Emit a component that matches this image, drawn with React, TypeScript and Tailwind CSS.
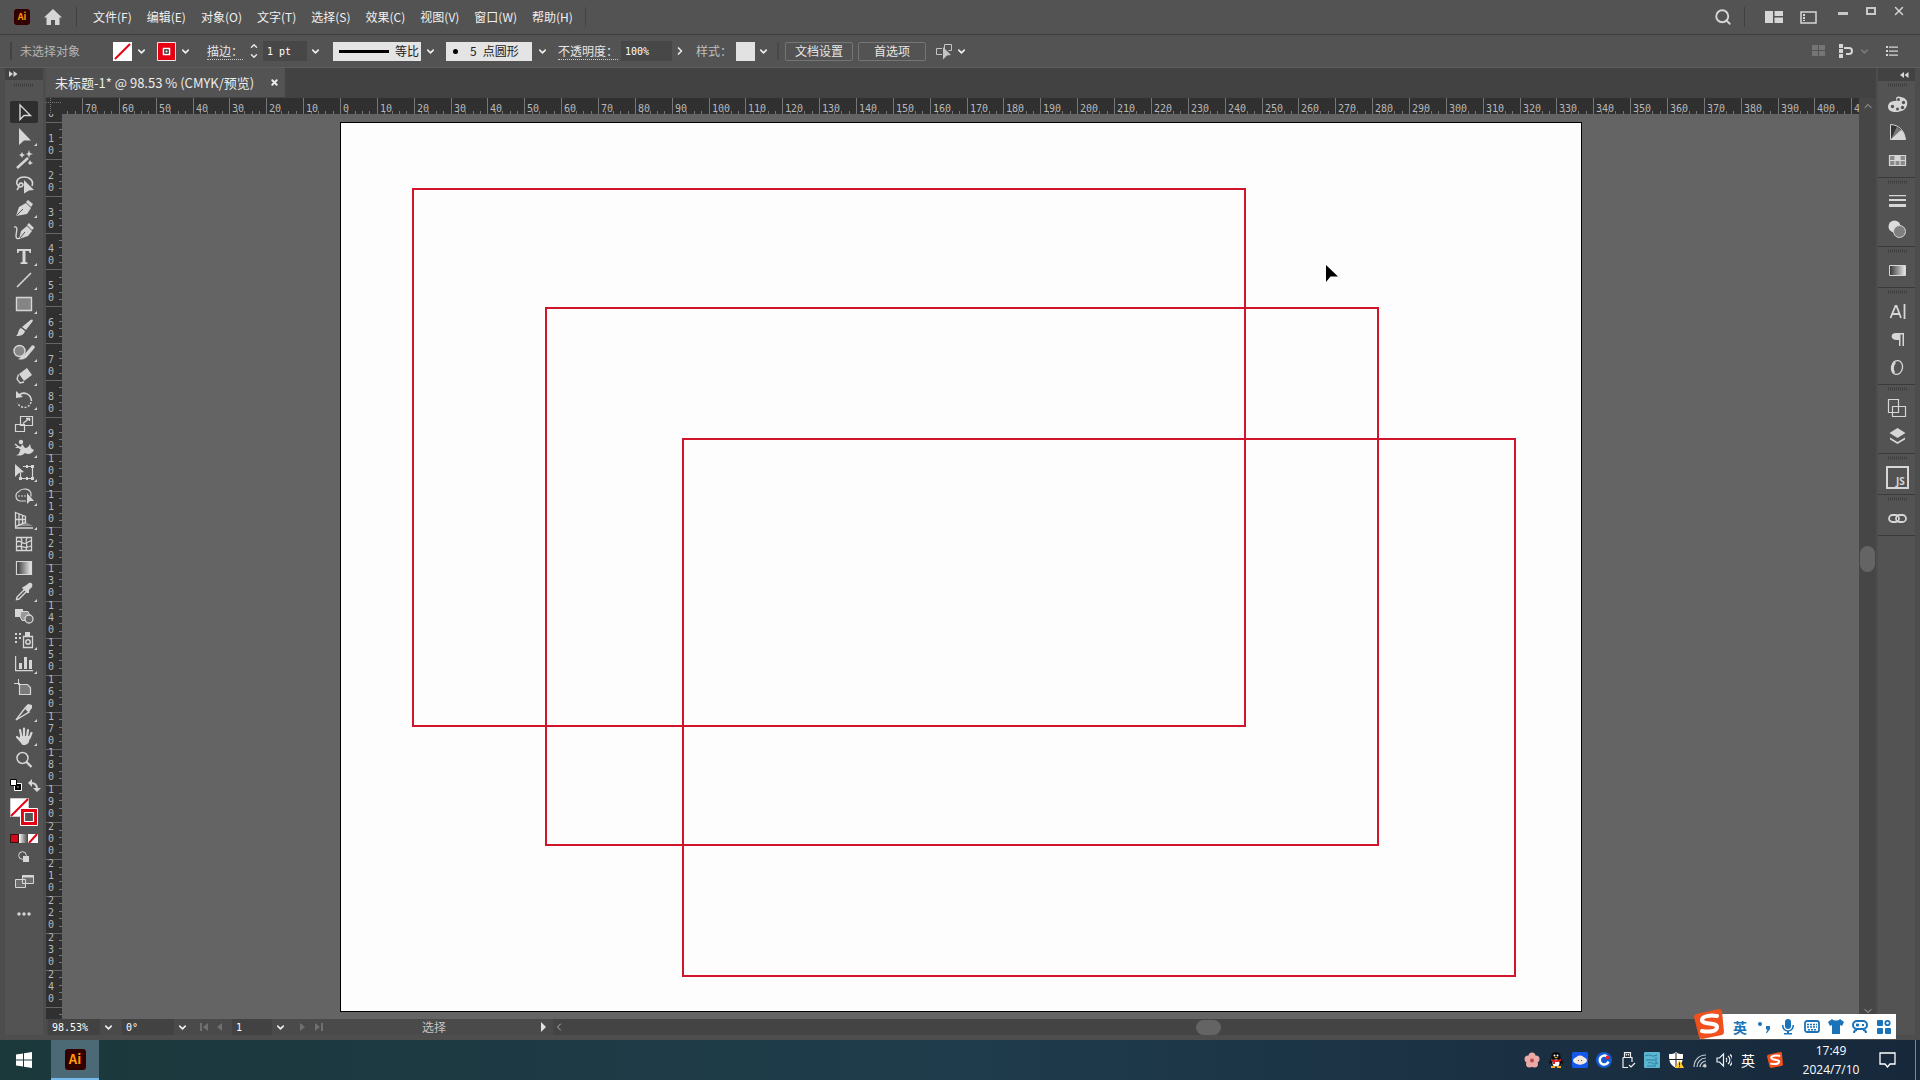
import { ReactNode, useState } from "react";
import { ChevronDown, ChevronLeft, ChevronRight, ChevronUp, Search, X } from "lucide-react";

const MENUS = ["文件(F)", "编辑(E)", "对象(O)", "文字(T)", "选择(S)", "效果(C)", "视图(V)", "窗口(W)", "帮助(H)"];

// pixels between two labelled ruler ticks (10 mm)
const PITCH = 36.86;

type Tool = { name: string; icon: ReactNode; more?: boolean };

const line = { fill: "none", stroke: "currentColor" };

// every tool glyph lives in a 28x22 box
const TOOLS: Tool[] = [
  { name: "选择工具", icon: <path {...line} strokeWidth="1.4" d="M10 4l10.5 10.5H14L10 18.5z" /> },
  { name: "直接选择工具", more: true, icon: <path fill="currentColor" d="M9 3l12 12.5h-7L9 20z" /> },
  {
    name: "魔棒工具",
    icon: (
      <>
        <path {...line} strokeWidth="2.4" d="M7 19l11-10" />
        <path fill="currentColor" d="M12 3l1 2 2 1-2 1-1 2-1-2-2-1 2-1zM19 1l1 3 3 1-3 1-1 3-1-3-2-1 2-1zM20 11l1 2 2 1-2 1-1 1-1-1-1-1 1-1z" />
      </>
    ),
  },
  {
    name: "套索工具",
    icon: (
      <>
        <path {...line} strokeWidth="1.6" d="M22 13c2-5-2-9-8-9-5 0-8 3-7 7 1 3 5 4 6 1 0-2-3-3-4 0 0 2 0 3-2 5" />
        <path fill="currentColor" d="M14 7l10 10-5 .5-5 3z" />
      </>
    ),
  },
  {
    name: "钢笔工具",
    more: true,
    icon: (
      <>
        <path fill="currentColor" d="M6 19l3-9 7-4 5 5-4 6z" />
        <path fill="currentColor" d="M16 5l2-2 5 4-2 3z" />
        <path stroke="#535353" d="M6.500 18.500L13 12" />
      </>
    ),
  },
  {
    name: "曲率工具",
    icon: (
      <>
        <path {...line} strokeWidth="1.4" d="M4 6c5-1 2 5 2 9 0 3 3 4 5 0" />
        <path fill="currentColor" d="M9 18l2-8 6-5 5 5-4 5zM17 4l2-2 5 5-2 2z" />
        <path stroke="#535353" d="M10 17l5-6" />
      </>
    ),
  },
  { name: "文字工具", more: true, icon: <path fill="currentColor" d="M7 4h14v4h-1.500l-.5-2H15.500v11l2 .5V19h-7v-1.500l2-.5V6H9l-.5 2H7z" /> },
  { name: "直线段工具", more: true, icon: <path {...line} strokeWidth="1.6" d="M7 18L21 4" /> },
  { name: "矩形工具", more: true, icon: <path fill="#858585" stroke="currentColor" strokeWidth="1.4" d="M6.500 4.500h15v13h-15z" /> },
  {
    name: "画笔工具",
    more: true,
    icon: <path fill="currentColor" d="M22 2.500c1 0 1 1 .5 2L16 13l-4-3 8.500-7zM11 11l4 3c-1 4-4 5-9 5 3-2 1.500-6 5-8z" />,
  },
  {
    name: "斑点画笔工具",
    more: true,
    icon: (
      <>
        <circle cx="9.500" cy="10" r="5.500" fill="#858585" stroke="currentColor" strokeWidth="1.4" />
        <path {...line} strokeWidth="3.500" strokeLinecap="round" d="M15 15.500L23 6" />
        <path fill="currentColor" d="M8 18c3-1 3-4 6-4l2 2c-2 3-5 3-8 2z" />
      </>
    ),
  },
  {
    name: "橡皮擦工具",
    more: true,
    icon: (
      <>
        <path fill="currentColor" d="M17 3l5 7-8 6-5-7z" />
        <path {...line} strokeWidth="1.3" d="M8.500 9.500L7 14l3 4 4-1" />
      </>
    ),
  },
  {
    name: "旋转工具",
    more: true,
    icon: (
      <>
        <path {...line} strokeWidth="1.6" d="M9 6c5-4 12-1 12.500 6" />
        <path {...line} strokeDasharray="2 1.500" strokeWidth="1.4" d="M21 13c-1 6-10 8-13.500 1" />
        <path fill="currentColor" d="M6 2v7l7-1z" />
      </>
    ),
  },
  {
    name: "比例缩放工具",
    more: true,
    icon: (
      <>
        <path {...line} strokeWidth="1.2" d="M10.500 3.500h12v9h-12zM5.500 11.500h9v7h-9z" />
        <path {...line} strokeWidth="1.4" d="M13 10.500l6-5M16 5.500h3.500V8" />
      </>
    ),
  },
  {
    name: "变形工具",
    more: true,
    icon: (
      <>
        <path fill="currentColor" d="M6 18c4 0 3-4 5-6-2-1-4 0-6-2 3 0 4-1 6 0l1-3 3 4c3 0 4-2 5-4 1 3 0 4 4 6-2 4-6 5-9 3-3 3-6 3-9 2z" />
        <circle cx="11" cy="5" r="2.200" fill="currentColor" />
        <path {...line} strokeWidth="1.5" d="M5 7l6 5" />
      </>
    ),
  },
  {
    name: "自由变换工具",
    more: true,
    icon: (
      <>
        <path {...line} strokeWidth="1.2" d="M13 5.500h9.500v12h-12V12" />
        <path fill="currentColor" d="M5 3l9 8-5 1-4 4zM21 4h3v3h-3zM21 16h3v3h-3zM9 16h3v3H9zM16 4h2v3h-2zM16 16h2v3h-2z" />
      </>
    ),
  },
  {
    name: "形状生成器工具",
    more: true,
    icon: (
      <>
        <path {...line} strokeWidth="1.2" d="M16 16H10a5 5 0 0 1-1-9.500c3-4 11-3 12 2v3" />
        <path {...line} strokeDasharray="2 1" d="M8 11h9" />
        <path fill="currentColor" d="M17 8l7 8h-4l-3 3z" />
      </>
    ),
  },
  {
    name: "透视网格工具",
    more: true,
    icon: (
      <>
        <path fill="#8a8a8a" d="M14 12l9 5H7z" />
        <path {...line} strokeWidth="1.3" d="M5.500 3.500l10 4v6l-10 4zM9 5v11M12.500 6.500v8M5.500 10.500h10M5 19h18" />
      </>
    ),
  },
  {
    name: "网格工具",
    icon: (
      <path {...line} strokeWidth="1.3" d="M6.500 4.500h15v13h-15zM7 9c4-3 5 3 9 1 3-1 4-3 5-2M7 14c4-3 6 3 14-1M11 5c3 4-2 7 1 12M17 5c-3 4 2 7-1 12" />
    ),
  },
  {
    name: "渐变工具",
    icon: (
      <>
        <linearGradient id="toolGradient">
          <stop offset="0" stopColor="#333" />
          <stop offset="1" stopColor="#eee" />
        </linearGradient>
        <path fill="url(#toolGradient)" stroke="currentColor" strokeWidth="1.2" d="M6.500 4.500h15v13h-15z" />
      </>
    ),
  },
  {
    name: "吸管工具",
    more: true,
    icon: (
      <>
        <path {...line} strokeWidth="1.4" d="M15 8l-8 8-.5 2.500L9 18l8-8" />
        <path fill="currentColor" d="M13 6l2-1 4-3c3-1 4 2 3 4l-3 3 0 3-2 0-5-5z" />
      </>
    ),
  },
  {
    name: "混合工具",
    icon: (
      <>
        <path fill="currentColor" d="M5 4h8v8H5z" />
        <path fill="#999" stroke="currentColor" d="M11 6.500h7l2 4-4 5h-4l-2-4z" />
        <circle cx="19" cy="14" r="4" fill="#666" stroke="currentColor" strokeWidth="1.3" />
      </>
    ),
  },
  {
    name: "符号喷枪工具",
    more: true,
    icon: (
      <>
        <path {...line} strokeWidth="1.3" d="M13.500 7.500h9v11h-9z" />
        <circle cx="18" cy="13" r="2.200" {...line} strokeWidth="1.5" />
        <path fill="currentColor" d="M15 3h5v4h-5zM5 4h2v2H5zM9 4h2v2H9zM5 8h2v2H5zM9 8h2v2H9zM5 12h2v2H5z" />
      </>
    ),
  },
  { name: "柱形图工具", more: true, icon: <path fill="currentColor" d="M5 3h1.200v14H23v1.300H5zM9 10h3v6H9zM14 4h3v12h-3zM19 7h3v9h-3z" /> },
  {
    name: "画板工具",
    icon: (
      <>
        <path fill="#7a7a7a" stroke="currentColor" strokeWidth="1.2" d="M9.500 7.500h8l3 3v7h-11z" />
        <path {...line} d="M8.500 2v6M4 6.500h6" />
      </>
    ),
  },
  {
    name: "切片工具",
    more: true,
    icon: (
      <>
        <path {...line} strokeWidth="1.4" d="M6 19l9-12 4 4z" />
        <path fill="currentColor" d="M15 6l3-3 4 1 0 3-3 4z" />
      </>
    ),
  },
  {
    name: "抓手工具",
    more: true,
    icon: (
      <>
        <path {...line} strokeWidth="2.200" strokeLinecap="round" d="M11.500 12L10 5M14 11V3.500M17 12l1-7M19.500 13l2-5M10 15l-3-3" />
        <path fill="currentColor" d="M10 11h10.500l-2 7-3 2h-3l-4-5z" />
      </>
    ),
  },
  {
    name: "缩放工具",
    icon: (
      <>
        <circle cx="12.500" cy="9" r="5.500" {...line} strokeWidth="1.500" />
        <path {...line} strokeWidth="2.400" d="M16.500 13l5 5" />
      </>
    ),
  },
];

const RECTS = [
  { x: 351, y: 75 },
  { x: 484, y: 194 },
  { x: 621, y: 325 },
];

function AiLogo({ className }: { className: string }) {
  return (
    <span className={`flex items-center justify-center rounded-[3px] bg-[#330000] font-bold text-[#ff9a00] ${className}`}>Ai</span>
  );
}

function DropButton({ label, dim }: { label: string; dim?: boolean }) {
  return (
    <button aria-label={label} className={`flex h-5 w-4 items-center justify-center ${dim ? "text-[#7a7a7a]" : "text-[#eeeeee]"}`}>
      <ChevronDown size={11} strokeWidth={3.5} />
    </button>
  );
}

function MenuBar() {
  return (
    <header className="flex h-[34px] shrink-0 items-center bg-[#535353] pl-3.5 text-[#f0f0f0]">
      <AiLogo className="h-4 w-4 text-[9px]" />
      <button aria-label="主页" className="ml-3.5">
        <svg width="18" height="16" viewBox="0 0 18 16" fill="#d6d6d6">
          <path d="M9 0l9 8.500h-2.500V16h-4.500v-5H7v5H2.500V8.500H0z" />
        </svg>
      </button>
      <span className="ml-3.5 h-5 w-px bg-[#404040]" />
      <nav className="ml-4 flex gap-[15px] text-xs">
        {MENUS.map((m) => (
          <button key={m} className="whitespace-nowrap">{m}</button>
        ))}
      </nav>
      <span className="ml-3 h-5 w-px bg-[#444444]" />

      <div className="ml-auto flex items-center text-[#d6d6d6]">
        <button aria-label="搜索"><Search size={18} strokeWidth={2.5} /></button>
        <span className="ml-3 h-5 w-px bg-[#404040]" />
        <button aria-label="排列文档" className="ml-5">
          <svg width="18" height="12" fill="currentColor"><path d="M0 0h8v12H0zM9.500 0H18v5H9.500zM9.500 6.500H18V12H9.500z" /></svg>
        </button>
        <button aria-label="切换工作区" className="ml-[17px]">
          <svg width="17" height="13" fill="none" stroke="currentColor">
            <path strokeWidth="1.500" d="M1 1h15v11H1z" />
            <path strokeWidth="2" strokeDasharray="2 1" d="M4 3v7" />
          </svg>
        </button>
      </div>
      <div className="mb-3 flex pl-3 pr-[7px] text-[#d6d6d6]">
        <button aria-label="最小化" className="flex w-7 items-center justify-center pt-1"><span className="h-[3px] w-2.5 bg-[#c8c8c8]" /></button>
        <button aria-label="最大化" className="flex w-7 items-center justify-center"><span className="h-2 w-2.5 border-2 border-[#c8c8c8]" /></button>
        <button aria-label="关闭" className="flex w-7 items-center justify-center"><X size={14} strokeWidth={2.5} /></button>
      </div>
    </header>
  );
}

function ControlBar() {
  return (
    <div className="flex h-[34px] shrink-0 items-center border-y border-t-[#3e3e3e] border-b-[#5e5e5e] bg-[#535353] pl-2.5 text-xs text-[#e6e6e6]">
      <span className="h-[18px] w-0.5 bg-[#424242]" />
      <span className="ml-2 w-[93px] whitespace-nowrap text-[#b4b4b4]">未选择对象</span>

      <button aria-label="填色" className="mr-px">
        <svg width="19" height="19" className="block"><path fill="#fff" d="M0 0h19v19H0z" /><path stroke="#e60012" strokeWidth="2" d="M2 17L17 2" /></svg>
      </button>
      <DropButton label="填色选项" />
      <button aria-label="描边颜色" className="ml-2 mr-px">
        <svg width="19" height="19" className="block">
          <path fill="#e60012" stroke="#e8e8e8" d="M.5.5h18v18H.5z" />
          <path fill="#222" stroke="#fff" strokeWidth="1.500" d="M6.500 6.500h6v6h-6z" />
          <path fill="#fff" d="M8.500 8.500h2v2h-2z" />
        </svg>
      </button>
      <DropButton label="描边颜色选项" />

      <label htmlFor="stroke" className="ml-3.5 w-9 whitespace-nowrap border-b border-dotted border-[#cccccc] leading-4">描边：</label>
      <div className="ml-1 flex w-3.5 flex-col items-center">
        <button aria-label="增加"><ChevronUp size={10} strokeWidth={3.5} /></button>
        <button aria-label="减少"><ChevronDown size={10} strokeWidth={3.5} /></button>
      </div>
      <input id="stroke" defaultValue="1 pt" className="ml-0.5 h-5 w-11 bg-[#474747] pl-1 font-['DejaVu_Sans_Mono',monospace] text-[10px] text-white" />
      <DropButton label="描边粗细" />

      <button className="ml-2.5 mr-px flex h-[19px] w-[88px] items-center bg-[#e4e4e4] pl-1.5 text-[#222222]">
        <span className="h-[3px] w-[50px] bg-black" />
        <span className="ml-1.5 text-xs">等比</span>
      </button>
      <DropButton label="变量宽度配置文件" />
      <button className="ml-2 mr-0.5 flex h-[19px] w-[86px] items-center bg-[#e4e4e4] pl-[7px] text-[#222222]">
        <span className="h-[5px] w-[5px] rounded-full bg-black" />
        <span className="ml-3">5</span>
        <span className="ml-1.5">点圆形</span>
      </button>
      <DropButton label="画笔定义" />

      <label htmlFor="opacity" className="ml-2 w-[60px] whitespace-nowrap border-b border-dotted border-[#cccccc] leading-4">不透明度：</label>
      <input id="opacity" defaultValue="100%" className="ml-[3px] h-5 w-[51px] bg-[#474747] pl-1 font-['DejaVu_Sans_Mono',monospace] text-[10px] text-white" />
      <button aria-label="不透明度选项" className="flex w-4 justify-center"><ChevronRight size={12} strokeWidth={3.5} /></button>

      <span className="ml-2 w-9 whitespace-nowrap text-[#c0c0c0]">样式：</span>
      <button aria-label="图形样式" className="ml-1 h-[19px] w-[19px] bg-[#e2e2e2]" />
      <DropButton label="样式选项" />
      <span className="ml-1.5 h-[18px] w-0.5 bg-[#484848]" />
      <button className="ml-1.5 h-[19px] w-[68px] rounded-[2px] border border-[#757575]"><span className="block leading-4">文档设置</span></button>
      <button className="ml-[5px] h-[19px] w-[68px] rounded-[2px] border border-[#757575]"><span className="block leading-4">首选项</span></button>
      <button aria-label="选择类似的对象" className="ml-2.5">
        <svg width="17" height="18" className="block">
          <path fill="none" stroke="#c4c4c4" d="M6 12.500H.5v-6H6M8.500 7V2.500h7v6h-3" />
          <path fill="#c4c4c4" d="M7 5l8 8-4 .5-4 4z" />
        </svg>
      </button>
      <DropButton label="选择选项" />

      <div className="ml-auto flex items-center pr-[22px]">
        <svg width="13" height="12" fill="#757575"><path d="M0 0h6v5H0zM7 0h6v5H7zM0 6h6v5H0zM7 6h6v5H7z" /></svg>
        <button aria-label="对齐" className="ml-3.5">
          <svg width="15" height="14" className="block">
            <path fill="#d6d6d6" d="M0 0h4v4H0zM0 5h4v4H0zM0 10h4v4H0z" />
            <path fill="none" stroke="#d6d6d6" strokeWidth="2" d="M5 4h5a3 3 0 0 1 0 6H7" />
          </svg>
        </button>
        <span className="ml-0.5"><DropButton label="对齐选项" dim /></span>
        <button aria-label="面板菜单" className="ml-3.5">
          <svg width="12" height="10" className="block" fill="#d6d6d6">
            <path d="M0 0h2v2H0zM0 4h2v2H0zM0 8h2v2H0zM3 .5h9v1.300H3zM3 4.500h9v1.300H3zM3 8.500h9v1.300H3z" />
          </svg>
        </button>
      </div>
    </div>
  );
}

function Grip() {
  return (
    <svg width="20" height="4" className="mx-auto block shrink-0" stroke="#3e3e3e" strokeWidth="3" strokeDasharray="1 1"><path d="M0 2h20" /></svg>
  );
}

function ToolPanel() {
  const [active, setActive] = useState("选择工具");

  return (
    <aside className="flex w-[38px] shrink-0 flex-col items-center bg-[#535353] text-[#d6d6d6]">
      <button aria-label="展开" className="flex h-3 w-full shrink-0 items-center bg-[#424242] pl-1">
        <svg width="9" height="6" fill="#d6d6d6"><path d="M0 0l4 3-4 3zM4.500 0l4 3-4 3z" /></svg>
      </button>
      <div className="pb-3.5 pt-[3px]"><Grip /></div>
      <div className="flex flex-col gap-0.5">
        {TOOLS.map((t) => (
          <button
            key={t.name}
            aria-label={t.name}
            onClick={() => setActive(t.name)}
            className={`block h-[22px] w-7 rounded-[2px] ${active === t.name ? "bg-[#2e2e2e]" : ""}`}
          >
            <svg width="28" height="22" viewBox="0 0 28 22" className="block">
              {t.icon}
              {t.more && <path fill="currentColor" d="M27 18v3h-3z" />}
            </svg>
          </button>
        ))}
      </div>

      <div className="mt-1.5 flex h-4 w-[34px] items-center justify-between pl-[3px]">
        <button aria-label="默认填色和描边">
          <svg width="12" height="12" className="block">
            <path fill="none" stroke="#fff" d="M4.500 4.500h7v7h-7z" />
            <path fill="none" stroke="#000" strokeWidth="2" d="M6 6h4v4H6z" />
            <path fill="#fff" stroke="#000" d="M.5.5h6v6h-6z" />
          </svg>
        </button>
        <button aria-label="互换填色和描边">
          <svg width="13" height="13" className="block">
            <path {...line} strokeWidth="2" d="M3 4c4 0 6 2 6 6" />
            <path fill="currentColor" d="M0 4l4-4v8zM5 9h8l-4 4z" />
          </svg>
        </button>
      </div>
      <svg width="28" height="28" className="mt-[5px] block shrink-0">
        <path fill="#fff" stroke="#ccc" d="M.5.5h18v18H.5z" />
        <path stroke="#e60012" strokeWidth="2" d="M1 18L18 1" />
        <path fill="#e60012" stroke="#fff" d="M10.500 10.500h17v17h-17z" />
        <path fill="#535353" stroke="#fff" strokeWidth="1.200" d="M14.500 14.500h9v9h-9z" />
      </svg>
      <div className="mt-2 flex h-[9px] w-7">
        <button aria-label="颜色" className="h-[9px] w-[9px] border border-[#3a1010] bg-[#d00a18]" />
        <button aria-label="渐变" className="h-[9px] w-[9px] bg-gradient-to-r from-white to-[#444444]" />
        <button aria-label="无">
          <svg width="10" height="9" className="block"><path fill="#fff" d="M0 0h10v9H0z" /><path stroke="#e60012" strokeWidth="2" d="M1 9L9 0" /></svg>
        </button>
      </div>
      <button aria-label="绘图模式" className="mt-1 flex h-5 items-center">
        <svg width="12" height="12" className="block"><circle cx="4.500" cy="4.500" r="3.800" {...line} /><path fill="currentColor" d="M5 5h6v6H5z" /></svg>
      </button>
      <button aria-label="更改屏幕模式" className="mt-[5px] flex h-5 items-center">
        <svg width="19" height="14" className="block">
          <path fill="#6c6c6c" stroke="currentColor" d="M.5 4.500h10v8H.5zM7.500.5h11v8h-11z" />
          <path stroke="currentColor" strokeWidth="2" d="M7 1.500h12" />
        </svg>
      </button>
      <button aria-label="编辑工具栏" className="mt-3 flex h-5 items-center">
        <svg width="14" height="4" fill="currentColor"><circle cx="2" cy="2" r="1.700" /><circle cx="7" cy="2" r="1.700" /><circle cx="12" cy="2" r="1.700" /></svg>
      </button>
    </aside>
  );
}

function TopRuler() {
  const origin = 278;
  const marks = Array.from({ length: 49 }, (_, i) => i - 7);
  return (
    <svg className="block h-4 min-w-0 flex-1 bg-[#303030] font-['DejaVu_Sans_Mono',monospace]" fill="#b8b8b8" fontSize="10">
      {Array.from({ length: 245 }, (_, i) => (
        <rect key={i} x={Math.round(origin + (i - 40) * (PITCH / 5))} y="13" width="1" height="3" fill="#777" />
      ))}
      {marks.map((n) => {
        const x = Math.round(origin + n * PITCH);
        return (
          <g key={n}>
            <rect x={x} y="0" width="1" height="16" fill="#777" />
            <text x={x + 3} y="14">{Math.abs(n) * 10}</text>
          </g>
        );
      })}
    </svg>
  );
}

function SideRuler() {
  const origin = 8;
  return (
    <svg className="block h-full w-4 shrink-0 bg-[#303030] font-['DejaVu_Sans_Mono',monospace]" fill="#b8b8b8" fontSize="10" textAnchor="middle">
      {Array.from({ length: 123 }, (_, i) => (
        <rect key={i} x="13" y={Math.round(origin + i * (PITCH / 5))} width="3" height="1" fill="#777" />
      ))}
      {Array.from({ length: 25 }, (_, n) => {
        const y = Math.round(origin + n * PITCH);
        const digits = String(n * 10).split("");
        return (
          <g key={n}>
            <rect x="0" y={y} width="16" height="1" fill="#666" />
            {digits.map((d, i) => (
              <text key={i} x="5" y={y - 5 - (digits.length - 1 - i) * 12}>{d}</text>
            ))}
          </g>
        );
      })}
    </svg>
  );
}

function Canvas() {
  return (
    <svg className="block h-full min-w-0 flex-1 bg-[#646464]">
      <rect x="278.500" y="8.500" width="1241" height="889" fill="#fdfdfd" stroke="#000" />
      {RECTS.map((r) => (
        <rect key={r.x} x={r.x} y={r.y} width="832" height="537" fill="none" stroke="#d0142a" strokeWidth="2" />
      ))}
      <path d="M1264 151v17l4.500-5.500h7.500z" fill="#000" />
    </svg>
  );
}

function StatusBar() {
  const field = "h-4 bg-[#424242] pl-1 font-['DejaVu_Sans_Mono',monospace] text-[10px] text-white";
  return (
    <footer className="flex h-4 shrink-0 items-center bg-[#4a4a4a]">
      <input aria-label="缩放比例" defaultValue="98.53%" className={`${field} ml-0.5 w-[52px]`} />
      <DropButton label="缩放菜单" />
      <input aria-label="旋转角度" defaultValue="0°" className={`${field} ml-1.5 w-[52px]`} />
      <DropButton label="旋转菜单" />
      <div className="ml-2.5 flex w-8 gap-2">
        <button aria-label="首项" disabled><svg width="9" height="8" fill="#707070"><path d="M0 0h2v8H0zM8 0v8L3 4z" /></svg></button>
        <button aria-label="上一项" disabled><svg width="6" height="8" fill="#707070"><path d="M5 0v8L0 4z" /></svg></button>
      </div>
      <input aria-label="画板导航" defaultValue="1" className={`${field} w-10`} />
      <DropButton label="画板菜单" />
      <div className="ml-3 flex w-[122px] gap-2">
        <button aria-label="下一项" disabled><svg width="6" height="8" fill="#707070"><path d="M0 0v8l5-4z" /></svg></button>
        <button aria-label="末项" disabled><svg width="9" height="8" fill="#707070"><path d="M1 0v8l5-4zM7 0h2v8H7z" /></svg></button>
      </div>
      <span className="w-[119px] text-xs leading-4 text-[#c4c4c4]">选择</span>
      <button aria-label="状态栏菜单"><svg width="6" height="10" className="block" fill="#e0e0e0"><path d="M0 0v10l5-5z" /></svg></button>
      <div className="ml-1.5 flex h-full flex-1 items-center bg-[#444444] pr-6">
        <ChevronLeft size={12} className="text-[#b0b0b0]" />
        <span className="flex-1" />
        <span className="h-[15px] w-[25px] rounded-full bg-[#646464]" />
        <span className="flex-1" />
      </div>
    </footer>
  );
}

function DocumentArea() {
  return (
    <main className="ml-[3px] flex min-w-0 flex-1 flex-col bg-[#424242]">
      <div className="flex h-[30px] shrink-0 items-start">
        <div className="flex h-[29px] w-[239px] items-center bg-[#535353] pl-[9px] text-[13px] text-[#ececec]">
          <span className="whitespace-nowrap">未标题-1* @ 98.53 % (CMYK/预览)</span>
          <button aria-label="关闭文档" className="ml-auto mr-1.5"><X size={9} strokeWidth={5} /></button>
        </div>
      </div>
      <div className="flex min-h-0 flex-1">
        <div className="flex min-w-0 flex-1 flex-col">
          <div className="flex shrink-0">
            <svg width="16" height="16" className="block shrink-0 bg-[#303030]" stroke="#777" strokeDasharray="1 1">
              <path d="M4.500 0v16M0 4.500h16" />
            </svg>
            <TopRuler />
          </div>
          <div className="flex min-h-0 flex-1">
            <SideRuler />
            <Canvas />
          </div>
        </div>
        <div className="flex w-[17px] shrink-0 flex-col items-center justify-between bg-[#464646] py-0.5 text-[#b0b0b0]">
          <ChevronUp size={12} />
          <span className="h-[26px] w-[15px] rounded-full bg-[#646464]" />
          <ChevronDown size={12} />
        </div>
      </div>
      <StatusBar />
    </main>
  );
}

const PANELS: { name: string; icon: ReactNode }[][] = [
  [
    {
      name: "颜色",
      icon: (
        <>
          <path fill="currentColor" d="M2 14c0-4 3-6 7-6 2 0 2-1 1-2 0-3 3-3 5-2 5 1 7 4 6 8-1 5-6 7-11 7-5 0-8-2-8-5z" />
          <g fill="#535353"><circle cx="12.500" cy="6.500" r="1.500" /><circle cx="17.500" cy="9.500" r="1.700" /><circle cx="16.500" cy="14.500" r="1.700" /><circle cx="11.500" cy="16" r="1.500" /><circle cx="6.500" cy="13.500" r="1.700" /></g>
        </>
      ),
    },
    {
      name: "颜色参考",
      icon: (
        <>
          <path fill="#333" stroke="currentColor" d="M4.500 3.500C13 4 18 9 19.500 18.500h-15z" />
          <path fill="#777" d="M5 18L11 5.500l4 4z" />
          <path fill="currentColor" d="M5 18L15 9c3 2 4 6 4.500 9.500z" />
        </>
      ),
    },
    {
      name: "色板",
      icon: (
        <>
          <path fill="#8a8a8a" stroke="currentColor" strokeWidth="1.200" d="M3.500 6.500h16v10h-16zM9 6.500v10M14 6.500v10M3.500 11.500h16" />
          <path fill="currentColor" d="M9 7h5v4H9z" />
        </>
      ),
    },
  ],
  [
    { name: "描边", icon: <path fill="currentColor" d="M3 5h17v1.200H3zM3 9h17v2H3zM3 14h17v3H3z" /> },
    {
      name: "透明度",
      icon: (
        <>
          <circle cx="8.500" cy="8.500" r="6" fill="#dcdcdc" />
          <circle cx="13.500" cy="13.500" r="6" fill="#808080" stroke="currentColor" />
        </>
      ),
    },
  ],
  [
    {
      name: "渐变",
      icon: (
        <>
          <linearGradient id="panelGradient"><stop offset="0" stopColor="#333" /><stop offset="1" stopColor="#eee" /></linearGradient>
          <path fill="url(#panelGradient)" stroke="currentColor" d="M3.500 6.500h16v10h-16z" />
        </>
      ),
    },
  ],
  [
    { name: "字符", icon: <path {...line} strokeWidth="1.800" d="M4.500 18L9.500 6h1l4.500 12M6 14h8M18.500 4v15" /> },
    { name: "段落", icon: <path fill="currentColor" d="M10 5h8v13h-1.500V6.500h-2V18H13v-6h-2C4 12 4 5 10 5z" /> },
    {
      name: "OpenType",
      icon: (
        <>
          <ellipse cx="11" cy="11.500" rx="5.500" ry="7" transform="rotate(12 11 11.500)" {...line} strokeWidth="1.300" />
          <path {...line} strokeWidth="2.500" d="M9 6c-3 3-3 8-1 11" />
        </>
      ),
    },
  ],
  [
    { name: "路径查找器", icon: <path fill="#535353" stroke="currentColor" strokeWidth="1.200" d="M2.500 2.500h10v13h-10zM6.500 9.500h13v10h-13z" /> },
    { name: "图层", icon: <path fill="currentColor" d="M11.500 3l8 5-8 5-8-5zM4 12.500l7.500 4.500 7.500-4.500v2L11.500 19 4 14.500z" /> },
  ],
  [
    {
      name: "脚本",
      icon: (
        <>
          <path {...line} strokeWidth="2" d="M1 1h21v21H1z" />
          <text x="10" y="19" fill="currentColor" fontSize="10" fontWeight="700" fontFamily="Open Sans, sans-serif">JS</text>
        </>
      ),
    },
  ],
  [
    {
      name: "链接",
      icon: (
        <>
          <rect x="3" y="8" width="10" height="7" rx="3.500" {...line} strokeWidth="1.800" />
          <rect x="10" y="8" width="10" height="7" rx="3.500" {...line} strokeWidth="1.800" />
        </>
      ),
    },
  ],
];

function PanelDock() {
  return (
    <aside className="ml-0.5 flex w-[37px] shrink-0 flex-col bg-[#535353] text-[#d6d6d6]">
      <button aria-label="折叠" className="flex h-[13px] items-center justify-end bg-[#424242] pr-1.5">
        <svg width="9" height="6" fill="#d6d6d6"><path d="M4 0v6L0 3zM8.500 0v6l-4-3z" /></svg>
      </button>
      {PANELS.map((group) => (
        <div key={group[0].name} className="flex flex-col items-center border-b border-[#3a3a3a] pb-[3px] pl-0.5 pt-0.5">
          <Grip />
          <div className="pt-[3px]">
            {group.map((p) => (
              <button key={p.name} aria-label={p.name} className="flex h-7 w-7 items-center justify-center">
                <svg width="23" height="23" viewBox="0 0 23 23">{p.icon}</svg>
              </button>
            ))}
          </div>
        </div>
      ))}
    </aside>
  );
}

function SogouS({ size }: { size: number }) {
  return (
    <svg width={size} height={size} viewBox="0 0 30 30" className="block">
      <path fill="#f0501e" d="M2 5L25 0q2 0 3 2l2 21q0 2-2 3L8 30q-2 0-3-2L0 8q0-2 2-3z" />
      <path fill="none" stroke="#fff" strokeWidth="4" strokeLinecap="round" d="M23 7c-7-1-15 0-15 4 0 5 15 2 15 7 0 5-9 5-15 4" />
    </svg>
  );
}

function ImeBar() {
  return (
    <div className="absolute bottom-[41px] right-6 flex h-[25px] w-[196px] items-center justify-end bg-white text-[#1a72b8]">
      <div className="absolute -left-1.5 bottom-0"><SogouS size={30} /></div>
      <button className="w-6 text-sm font-bold leading-6">英</button>
      <button aria-label="中文标点" className="flex w-6 justify-center">
        <svg width="14" height="14" fill="currentColor"><circle cx="3" cy="4" r="2" /><path d="M9 6h4v3l-3 4H9l1.500-3.500H9z" /></svg>
      </button>
      <button aria-label="语音" className="flex w-6 justify-center">
        <svg width="14" height="16" fill="currentColor"><rect x="4" y="0" width="6" height="10" rx="3" /><path d="M1 6h1.500c0 7 9 7 9 0H13c0 4-2 6-5 6.500V14h3v1.500H3V14h3v-1.500C3 12 1 10 1 6z" /></svg>
      </button>
      <button aria-label="软键盘" className="flex w-6 justify-center">
        <svg width="16" height="13" fill="none" stroke="currentColor">
          <rect x="1" y="1" width="14" height="11" rx="2" strokeWidth="1.800" />
          <path strokeWidth="1.600" strokeDasharray="2 1" d="M3 4.500h10M3 7h10M4 9.800h8" />
        </svg>
      </button>
      <button aria-label="皮肤" className="flex w-6 justify-center">
        <svg width="16" height="15" fill="currentColor"><path d="M4 0c2 2 6 2 8 0l4 3-2 4-2-1v9H4V6L2 7 0 3z" /></svg>
      </button>
      <button aria-label="智能助手" className="flex w-6 justify-center">
        <svg width="16" height="14" fill="none" stroke="currentColor" strokeWidth="2">
          <rect x="1" y="1" width="14" height="8" rx="4" />
          <path d="M4 5h3M5.500 3.500v3M10 5h2M2 13c0-2 1-3 3-3M14 13c0-2-1-3-3-3" />
        </svg>
      </button>
      <button aria-label="工具箱" className="flex w-6 justify-center">
        <svg width="14" height="14" fill="currentColor">
          <rect width="6" height="6" rx="1" /><circle cx="10.500" cy="3" r="2.200" fill="none" stroke="currentColor" strokeWidth="1.800" />
          <rect y="8" width="6" height="6" rx="1" /><rect x="8" y="8" width="6" height="6" rx="1" />
        </svg>
      </button>
    </div>
  );
}

const TRAY: { name: string; icon: ReactNode }[] = [
  {
    name: "樱花",
    icon: (
      <>
        <g fill="#eda9a4"><circle cx="8" cy="4" r="3.500" /><circle cx="12" cy="7" r="3.500" /><circle cx="10.500" cy="12" r="3.500" /><circle cx="5.500" cy="12" r="3.500" /><circle cx="4" cy="7" r="3.500" /></g>
        <circle cx="8" cy="8.500" r="2" fill="#b84c50" />
      </>
    ),
  },
  {
    name: "QQ",
    icon: (
      <>
        <path fill="#0c0c0c" d="M8 0c4 0 5 3 4.500 6 2 2 3 5 2 6l-1.500-1c-1 5-9 5-10 0l-1.500 1c-1-1 0-4 2-6C3 3 4 0 8 0z" />
        <ellipse cx="8" cy="11" rx="3.500" ry="3.500" fill="#fff" />
        <circle cx="6.500" cy="3.500" r="1" fill="#fff" /><circle cx="9.500" cy="3.500" r="1" fill="#fff" />
        <path fill="#e02020" d="M3 7c3 1.500 7 1.500 10 0v2c-2 1-4 1-6 1v2H5V9.500L3 9z" />
        <path fill="#f5a81c" d="M6 5h4l-2 1.500zM3 14h4v2H3zM9 14h4v2H9z" />
      </>
    ),
  },
  {
    name: "百度网盘",
    icon: (
      <>
        <rect width="16" height="16" rx="2" fill="#1458f0" />
        <ellipse cx="8" cy="8.500" rx="7" ry="4" fill="#eef0f4" /><circle cx="8" cy="8" r="4.500" fill="#f4e6da" />
        <path fill="#555" d="M6 8h1v1H6zM9 8h1v1H9z" />
      </>
    ),
  },
  {
    name: "电脑管家",
    icon: (
      <>
        <circle cx="8" cy="8" r="8" fill="#135bd0" />
        <path fill="none" stroke="#fff" strokeWidth="2.500" d="M11 4.500a4.500 4.500 0 1 0 1.500 5" />
        <circle cx="11.500" cy="5.500" r="2" fill="#e82230" />
      </>
    ),
  },
  {
    name: "安全删除硬件",
    icon: <path fill="none" stroke="#eee" strokeWidth="1.200" d="M4.500 5V.6h6V5M3 5.500h9V10M3 5.500v10h5M6.500 2v1.500M8.500 2v1.500M9 13l2 2 4-4" />,
  },
  {
    name: "翻译",
    icon: (
      <>
        <rect width="16" height="16" rx="1" fill="#5cb8d0" />
        <path fill="none" stroke="#2a7aa4" d="M1 4c5-3 6 2 12-1M2 8h9M4 11c4-2 5 3 10 0M3 14h9M12 5v6" />
      </>
    ),
  },
  {
    name: "Windows 安全中心",
    icon: (
      <>
        <path fill="#fff" d="M8 0c2 2 4 2 7 2 0 6 0 10-7 14C1 12 1 8 1 2c3 0 5 0 7-2z" />
        <path stroke="#222" d="M8 1v14M1 7.500h14" />
        <path fill="#ffc629" d="M11.500 8l4.500 8H7z" />
        <path stroke="#222" d="M11.500 10.500v3M11.500 14.200v1" />
      </>
    ),
  },
  {
    name: "网络",
    icon: (
      <g fill="none" stroke="#c8ced4" strokeWidth="1.200">
        <path d="M2 15C2 8 7 3 14 3M5 15c0-5 4-9 9-9M8 15c0-3 3-6 6-6M11 15c0-1.500 1.500-3 3-3" />
        <circle cx="13" cy="14" r="1" fill="#fff" />
      </g>
    ),
  },
  {
    name: "音量",
    icon: <path fill="none" stroke="#eee" strokeWidth="1.200" d="M1 6h2.500l4-4v12l-4-4H1zM10 6c1 1 1 3 0 4M12 4c2.500 2 2.500 6 0 8M14 2.500c3.500 3 3.500 8 0 11" />,
  },
];

function Taskbar() {
  return (
    <div className="flex h-10 shrink-0 items-stretch bg-gradient-to-r from-[#1b383b] via-[#1f3c4c] to-[#17283b] text-white">
      <button aria-label="开始" className="flex w-[51px] items-center pl-4">
        <svg width="16" height="16" fill="#fff"><path d="M0 2.500l7-1v6H0zM8 1.300L16 0v7.500H8zM0 8.500h7v6l-7-1zM8 8.500h8V16l-8-1.300z" /></svg>
      </button>
      <button aria-label="Adobe Illustrator" className="flex w-12 items-center justify-center border-b-2 border-[#76b9ed] bg-[#4c6a76]">
        <AiLogo className="h-[21px] w-[21px] text-[13px]" />
      </button>

      <div className="ml-auto flex items-center">
        {TRAY.map((t) => (
          <button key={t.name} aria-label={t.name} className="flex w-6 justify-center">
            <svg width="16" height="16" viewBox="0 0 16 16">{t.icon}</svg>
          </button>
        ))}
        <button className="w-6 text-sm">英</button>
        <button aria-label="搜狗输入法" className="flex w-[30px] justify-center"><SogouS size={16} /></button>
        <button className="ml-2.5 w-[62px] whitespace-nowrap font-['Open_Sans',sans-serif] text-xs leading-[19px]">
          <span className="block">17:49</span>
          <span className="block">2024/7/10</span>
        </button>
        <button aria-label="通知" className="flex w-[50px] justify-center">
          <svg width="17" height="16" fill="none" stroke="#fff" strokeWidth="1.300"><path d="M1 1h15v11h-5l-2.500 3L6 12H1z" /></svg>
        </button>
        <span className="ml-[3px] mr-1 h-10 w-px bg-[#7d8894]" />
      </div>
    </div>
  );
}

export default function App() {
  return (
    <div className="relative flex h-screen flex-col overflow-hidden bg-[#4d4d4d] font-['Noto_Sans_CJK_SC',sans-serif]">
      <MenuBar />
      <ControlBar />
      <div className="flex min-h-0 flex-1 px-[5px] pb-[5px]">
        <ToolPanel />
        <DocumentArea />
        <PanelDock />
      </div>
      <Taskbar />
      <ImeBar />
    </div>
  );
}
